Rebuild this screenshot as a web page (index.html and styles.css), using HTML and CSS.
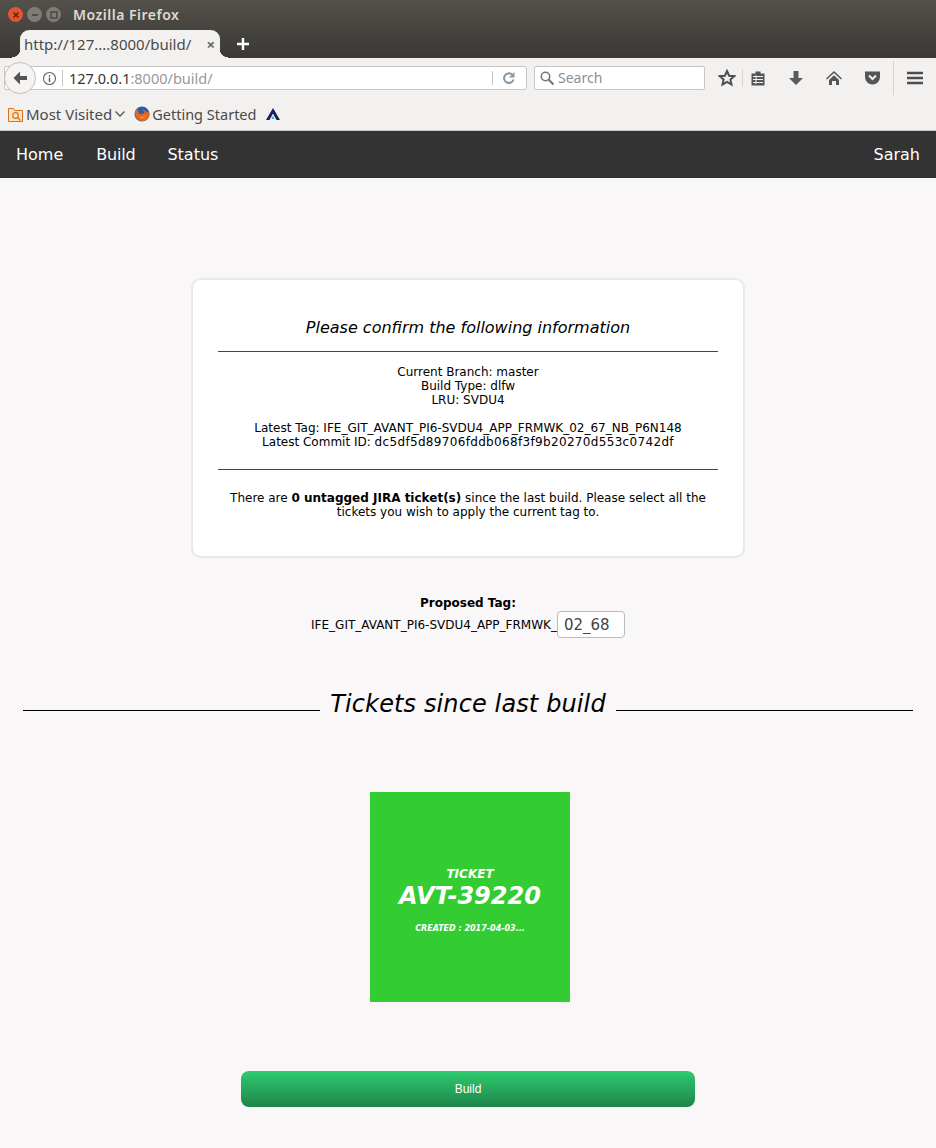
FILE: index.html
```html
<!DOCTYPE html>
<html>
  <head>
    <meta charset="utf-8">
    <title>Build</title>
    <link rel="stylesheet" href="styles.css">
  </head>
  <body>
    <div class="browser">
      <div class="titlebar">
        <span class="win-btn close"><svg width="8" height="8" viewBox="0 0 8 8"><path d="M1.5 1.5l5 5M6.5 1.5l-5 5" stroke="#5a1a08" stroke-width="1.4"/></svg></span>
        <span class="win-btn"><svg width="8" height="8" viewBox="0 0 8 8"><path d="M1 4h6" stroke="#3c3b37" stroke-width="1.4"/></svg></span>
        <span class="win-btn"><svg width="8" height="8" viewBox="0 0 8 8"><rect x="1" y="1" width="6" height="6" fill="none" stroke="#3c3b37" stroke-width="1.2"/></svg></span>
        <span class="win-title">Mozilla Firefox</span>
      </div>
      <div class="tabstrip">
        <div class="tab">
          <span class="tab-label">http://127....8000/build/</span>
          <span class="tab-close">×</span>
        </div>
        <svg class="new-tab" width="14" height="14" viewBox="0 0 14 14"><path d="M7 1v12M1 7h12" stroke="#fff" stroke-width="2.4"/></svg>
      </div>
      <div class="toolbar">
        <div class="urlbar">
          <span class="back"><svg width="18" height="18" viewBox="0 0 18 18"><path d="M9 2.5L2.5 9 9 15.500V11h7V7H9z" fill="#555"/></svg></span>
          <svg class="info" width="15" height="15" viewBox="0 0 15 15"><circle cx="7.500" cy="7.500" r="6" fill="none" stroke="#666" stroke-width="1.100"/><path d="M7.500 6.500v4.500M7.500 4v1.500" stroke="#666" stroke-width="1.500"/></svg>
          <span class="url"><b>127.0.0.1</b>:8000/build/</span>
          <svg class="reload" width="14" height="14" viewBox="0 0 14 14"><path d="M11.500 8.500A4.800 4.800 0 1 1 10 3.500" fill="none" stroke="#8a97a3" stroke-width="2"/><path d="M12.500 1v5.500H7z" fill="#8a97a3"/></svg>
        </div>
        <div class="searchbar">
          <svg width="16" height="16" viewBox="0 0 16 16"><circle cx="6.500" cy="6.500" r="4.200" fill="none" stroke="#777" stroke-width="1.600"/><path d="M9.500 9.500l5 5" stroke="#777" stroke-width="2.200"/></svg>
          <span>Search</span>
        </div>
        <svg class="tool star" width="18" height="18" viewBox="0 0 18 18"><path d="M9 2l2.100 4.700 5.100.5-3.800 3.400 1.100 5L9 13l-4.500 2.600 1.100-5-3.800-3.400 5.100-.5z" fill="none" stroke="#4d4d4d" stroke-width="2"/></svg>
        <span class="tool-sep"></span>
        <svg class="tool list" width="16" height="16" viewBox="0 0 16 16"><path d="M1.500 3.500h4V1.500h5v2h4v12h-13z" fill="#555"/><path d="M3 6.500h10M3 9.500h10M3 12.500h10M6 5.500v8.500" stroke="#f2f1ef" stroke-width="1"/></svg>
        <svg class="tool down" width="16" height="16" viewBox="0 0 16 16"><path d="M5.500 1h5v7H15l-7 7-7-7h4.500z" fill="#5a5a5a"/></svg>
        <svg class="tool home" width="18" height="16" viewBox="0 0 18 16"><path d="M9 1L1 8.500l1 1L9 3l7 6.500 1-1z" fill="#555"/><path d="M4 10l5-4.700 5 4.700v5h-3v-4H7v4H4z" fill="#555"/></svg>
        <svg class="tool pocket" width="17" height="16" viewBox="0 0 17 16"><path d="M1 1.500h15V7a7.500 7.500 0 0 1-15 0z" fill="#555"/><path d="M5 5.500l3.500 3.500L12 5.500" fill="none" stroke="#f2f1ef" stroke-width="2"/></svg>
        <span class="tool-sep tall"></span>
        <svg class="tool menu" width="16" height="14" viewBox="0 0 16 14"><path d="M0 2h16M0 7h16M0 12h16" stroke="#4d4d4d" stroke-width="2.400"/></svg>
      </div>
      <div class="bookmarks">
        <svg width="15" height="15" viewBox="0 0 15 15"><path d="M.5 1.500h5l1 2h8v11H.5z" fill="#f7e3c6" stroke="#d9731a"/><circle cx="7.500" cy="8.500" r="2.800" fill="none" stroke="#d9731a" stroke-width="1.200"/><path d="M9.500 10.500l3 3" stroke="#d9731a" stroke-width="1.300"/></svg>
        <span class="bm-label">Most Visited</span>
        <svg class="bm-caret" width="10" height="6" viewBox="0 0 10 6"><path d="M.5 .5L5 5 9.500 .5" fill="none" stroke="#555" stroke-width="1.300"/></svg>
        <svg class="bm-fox" width="16" height="16" viewBox="0 0 16 16"><circle cx="8" cy="8" r="7.500" fill="#2a5fa8"/><path d="M3 2.500C1 5 .5 9 2.500 12c2.500 3.500 8 4.200 11 1 2.300-2.500 2.500-6 1.300-8.500-.4 1.500-1.300 2-2.300 2C12 5 10 4 8.500 4.500 9.800 5 10.500 6 10.300 7 9 8 7 8.500 6 8 5 7.500 4 6 4 4.500z" fill="#e8681c"/><path d="M5.500 11.500c2 1.200 5 .5 6-1.500-2 1-4 1.300-6 1.500z" fill="#f7b32b"/></svg>
        <span class="bm-label bm-started">Getting Started</span>
        <svg class="bm-logo" width="16" height="14" viewBox="0 0 16 14"><path d="M8 1L1 13h3.500L8 6.500 11.500 13H15z" fill="#1d1a66"/><path d="M8 8.500L6.500 12h3z" fill="#27b7cf"/></svg>
      </div>
    </div>

    <nav class="navbar">
      <div class="nav-left">
        <a>Home</a>
        <a class="nav-build">Build</a>
        <a>Status</a>
      </div>
      <a>Sarah</a>
    </nav>

    <div class="confirm-card">
      <h3>Please confirm the following information</h3>
      <hr>
      <p>Current Branch: master<br>Build Type: dlfw<br>LRU: SVDU4</p>
      <p class="latest">Latest Tag: IFE_GIT_AVANT_PI6-SVDU4_APP_FRMWK_02_67_NB_P6N148<br>Latest Commit ID: <span class="commit-id">dc5df5d89706fddb068f3f9b20270d553c0742df</span></p>
      <hr class="second">
      <p class="tickets-note">There are <b>0 untagged JIRA ticket(s)</b> since the last build. Please select all the tickets you wish to apply the current tag to.</p>
    </div>

    <div class="proposed">
      <b>Proposed Tag:</b>
      <div class="proposed-row">IFE_GIT_AVANT_PI6-SVDU4_APP_FRMWK_<input type="text" value="02_68"></div>
    </div>

    <div class="section-head">
      <span class="rule"></span>
      <h2>Tickets since last build</h2>
      <span class="rule"></span>
    </div>

    <div class="tickets">
      <div class="ticket">
        <div class="ticket-small">TICKET</div>
        <div class="ticket-id">AVT-39220</div>
        <div class="ticket-date">CREATED : 2017-04-03...</div>
      </div>
    </div>

    <button class="build-btn">Build</button>
  </body>
</html>
```

FILE: styles.css
```css
html, body {
  margin: 0;
  padding: 0;
}
body {
  background: #f9f7f8;
  color: #000;
  font: 12px/14px "DejaVu Sans", sans-serif;
  height: 1148px;
  overflow: hidden;
}

/* browser chrome */
.browser {
  font-family: "Noto Sans", "Open Sans", sans-serif;
}
.titlebar {
  align-items: center;
  background: linear-gradient(#54514c, #46443f);
  display: flex;
  gap: 4px;
  height: 29px;
  padding-left: 8px;
}
.win-btn {
  align-items: center;
  background: #7d7c76;
  border-radius: 50%;
  display: flex;
  height: 15px;
  justify-content: center;
  width: 15px;
}
.win-btn.close {
  background: #e2562b;
}
.win-title {
  color: #dfdbd2;
  font-size: 14px;
  font-weight: 600;
  letter-spacing: .5px;
  margin-left: 8px;
}
.tabstrip {
  align-items: center;
  background: linear-gradient(#46443f, #3a3935);
  display: flex;
  height: 29px;
}
.tab {
  align-items: center;
  align-self: flex-end;
  background: #f2f1ef;
  border-radius: 9px 9px 0 0;
  box-sizing: border-box;
  display: flex;
  height: 28px;
  justify-content: space-between;
  margin-left: 20px;
  padding: 0 5px 0 4px;
  position: relative;
  width: 200px;
}
.tab::before, .tab::after {
  bottom: 0;
  content: "";
  height: 9px;
  position: absolute;
  width: 8px;
}
.tab::before {
  background: radial-gradient(circle at 0 0, transparent 8px, #f2f1ef 8.5px);
  left: -8px;
}
.tab::after {
  background: radial-gradient(circle at 100% 0, transparent 8px, #f2f1ef 8.5px);
  right: -8px;
}
.tab-label {
  color: #4a4a4a;
  font-size: 15px;
  white-space: nowrap;
}
.tab-close {
  color: #666;
  font-size: 15px;
  font-weight: 700;
}
.new-tab {
  margin-left: 16px;
}
.toolbar {
  align-items: center;
  background: #f2f1ef;
  display: flex;
  height: 40px;
  padding-left: 4px;
}
.urlbar {
  align-items: center;
  background: #fff;
  border: 1px solid #c8c6c2;
  border-radius: 2px 3px 3px 2px;
  box-sizing: border-box;
  display: flex;
  height: 24px;
  width: 523px;
}
.back {
  align-items: center;
  background: #f5f4f2;
  border: 1px solid #c4c3c0;
  border-radius: 50%;
  box-sizing: border-box;
  display: flex;
  flex: none;
  height: 32px;
  justify-content: center;
  margin-left: -1px;
  width: 32px;
}
.info {
  flex: none;
  margin-left: 6px;
}
.url {
  border-left: 1px solid #c8c6c2;
  color: #999;
  flex: 1;
  font-size: 14.5px;
  line-height: 16px;
  margin-left: 5px;
  padding-left: 6px;
}
.url b {
  color: #333;
  font-weight: 400;
}
.reload {
  border-left: 1px solid #c8c6c2;
  box-sizing: content-box;
  padding-left: 9px;
  padding-right: 10px;
}
.searchbar {
  align-items: center;
  background: #fff;
  border: 1px solid #c8c6c2;
  border-radius: 2px;
  box-sizing: border-box;
  color: #8e8e8e;
  display: flex;
  font-size: 14px;
  gap: 3px;
  height: 24px;
  margin-left: 7px;
  padding-left: 4px;
  width: 171px;
}
.tool {
  flex: none;
}
.star {
  margin-left: 13px;
}
.tool-sep {
  background: #d5d3cf;
  height: 18px;
  margin-left: 6px;
  width: 1px;
}
.tool-sep.tall {
  height: 34px;
  margin-left: 12px;
}
.list {
  margin-left: 7px;
}
.down {
  margin-left: 22px;
}
.home {
  margin-left: 21px;
}
.pocket {
  margin-left: 21px;
}
.menu {
  margin-left: 13px;
}
.bookmarks {
  align-items: center;
  background: #f2f1ef;
  border-bottom: 1px solid #c9c8c5;
  box-sizing: border-box;
  color: #4a4a4a;
  display: flex;
  font-size: 15px;
  height: 33px;
  padding-left: 8px;
}
.bm-label {
  margin-left: 3px;
}
.bm-started {
  font-size: 14.5px;
  margin-left: 2px;
}
.bm-caret {
  margin-left: 3px;
}
.bm-fox {
  margin-left: 9px;
}
.bm-logo {
  margin-left: 9px;
}

/* site nav */
.navbar {
  align-items: center;
  background: #333;
  color: #fff;
  display: flex;
  font-size: 16px;
  height: 47px;
  justify-content: space-between;
  padding: 0 16px;
}
.nav-left {
  display: flex;
  gap: 32px;
}
.nav-build {
  letter-spacing: -.2px;
  margin-left: 1px;
}

.confirm-card {
  background: #fff;
  border: 2px solid #e8e8e8;
  border-radius: 10px;
  box-sizing: border-box;
  height: 280px;
  margin: 100px auto 0;
  padding: 38px 25px 0;
  text-align: center;
  width: 554px;
}
.confirm-card h3 {
  font-size: 16px;
  font-style: italic;
  font-weight: 400;
  line-height: 20px;
  margin: 0;
}
.confirm-card hr {
  border: 0;
  border-top: 1px solid #444;
  margin: 13px 0;
}
.confirm-card p {
  margin: 0;
}
.confirm-card .latest {
  margin-top: 14px;
}
.commit-id {
  letter-spacing: .33px;
}
.confirm-card hr.second {
  margin: 20px 0 21px;
}
.proposed {
  margin-top: 38px;
  text-align: center;
}
.proposed-row {
  align-items: center;
  display: flex;
  justify-content: center;
  margin-top: 1px;
}
.proposed-row input {
  background: #fff;
  border: 1px solid #bbb;
  border-radius: 4px;
  box-sizing: border-box;
  color: #444;
  font: 15px "DejaVu Sans", sans-serif;
  height: 27px;
  margin: 0;
  padding: 0 6px;
  width: 68px;
}
.section-head {
  align-items: center;
  display: flex;
  gap: 10px;
  margin: 51px 23px 0;
}
.section-head h2 {
  font-size: 24px;
  font-style: italic;
  font-weight: 400;
  letter-spacing: .12px;
  line-height: 30px;
  margin: 0;
  white-space: nowrap;
}
.section-head .rule {
  background: #000;
  flex: 1;
  height: 1px;
  margin-top: 12px;
}
.tickets {
  display: flex;
  justify-content: center;
  margin-top: 73px;
  padding-left: 4px;
}
.ticket {
  background: #3c3;
  box-sizing: border-box;
  color: #fff;
  font-style: italic;
  font-weight: 700;
  height: 210px;
  padding-top: 75px;
  text-align: center;
  width: 200px;
}
.ticket-small {
  font-size: 12px;
  line-height: 14px;
}
.ticket-id {
  font-size: 24px;
  line-height: 30px;
}
.ticket-date {
  font-size: 8px;
  line-height: 12px;
  margin-top: 12px;
}
.build-btn {
  background: linear-gradient(#2ecc71, #1e8449);
  border: 0;
  border-radius: 8px;
  color: #fff;
  display: block;
  font: 12px "Liberation Sans", sans-serif;
  height: 36px;
  margin: 69px auto 0;
  padding: 0;
  width: 454px;
}
```
